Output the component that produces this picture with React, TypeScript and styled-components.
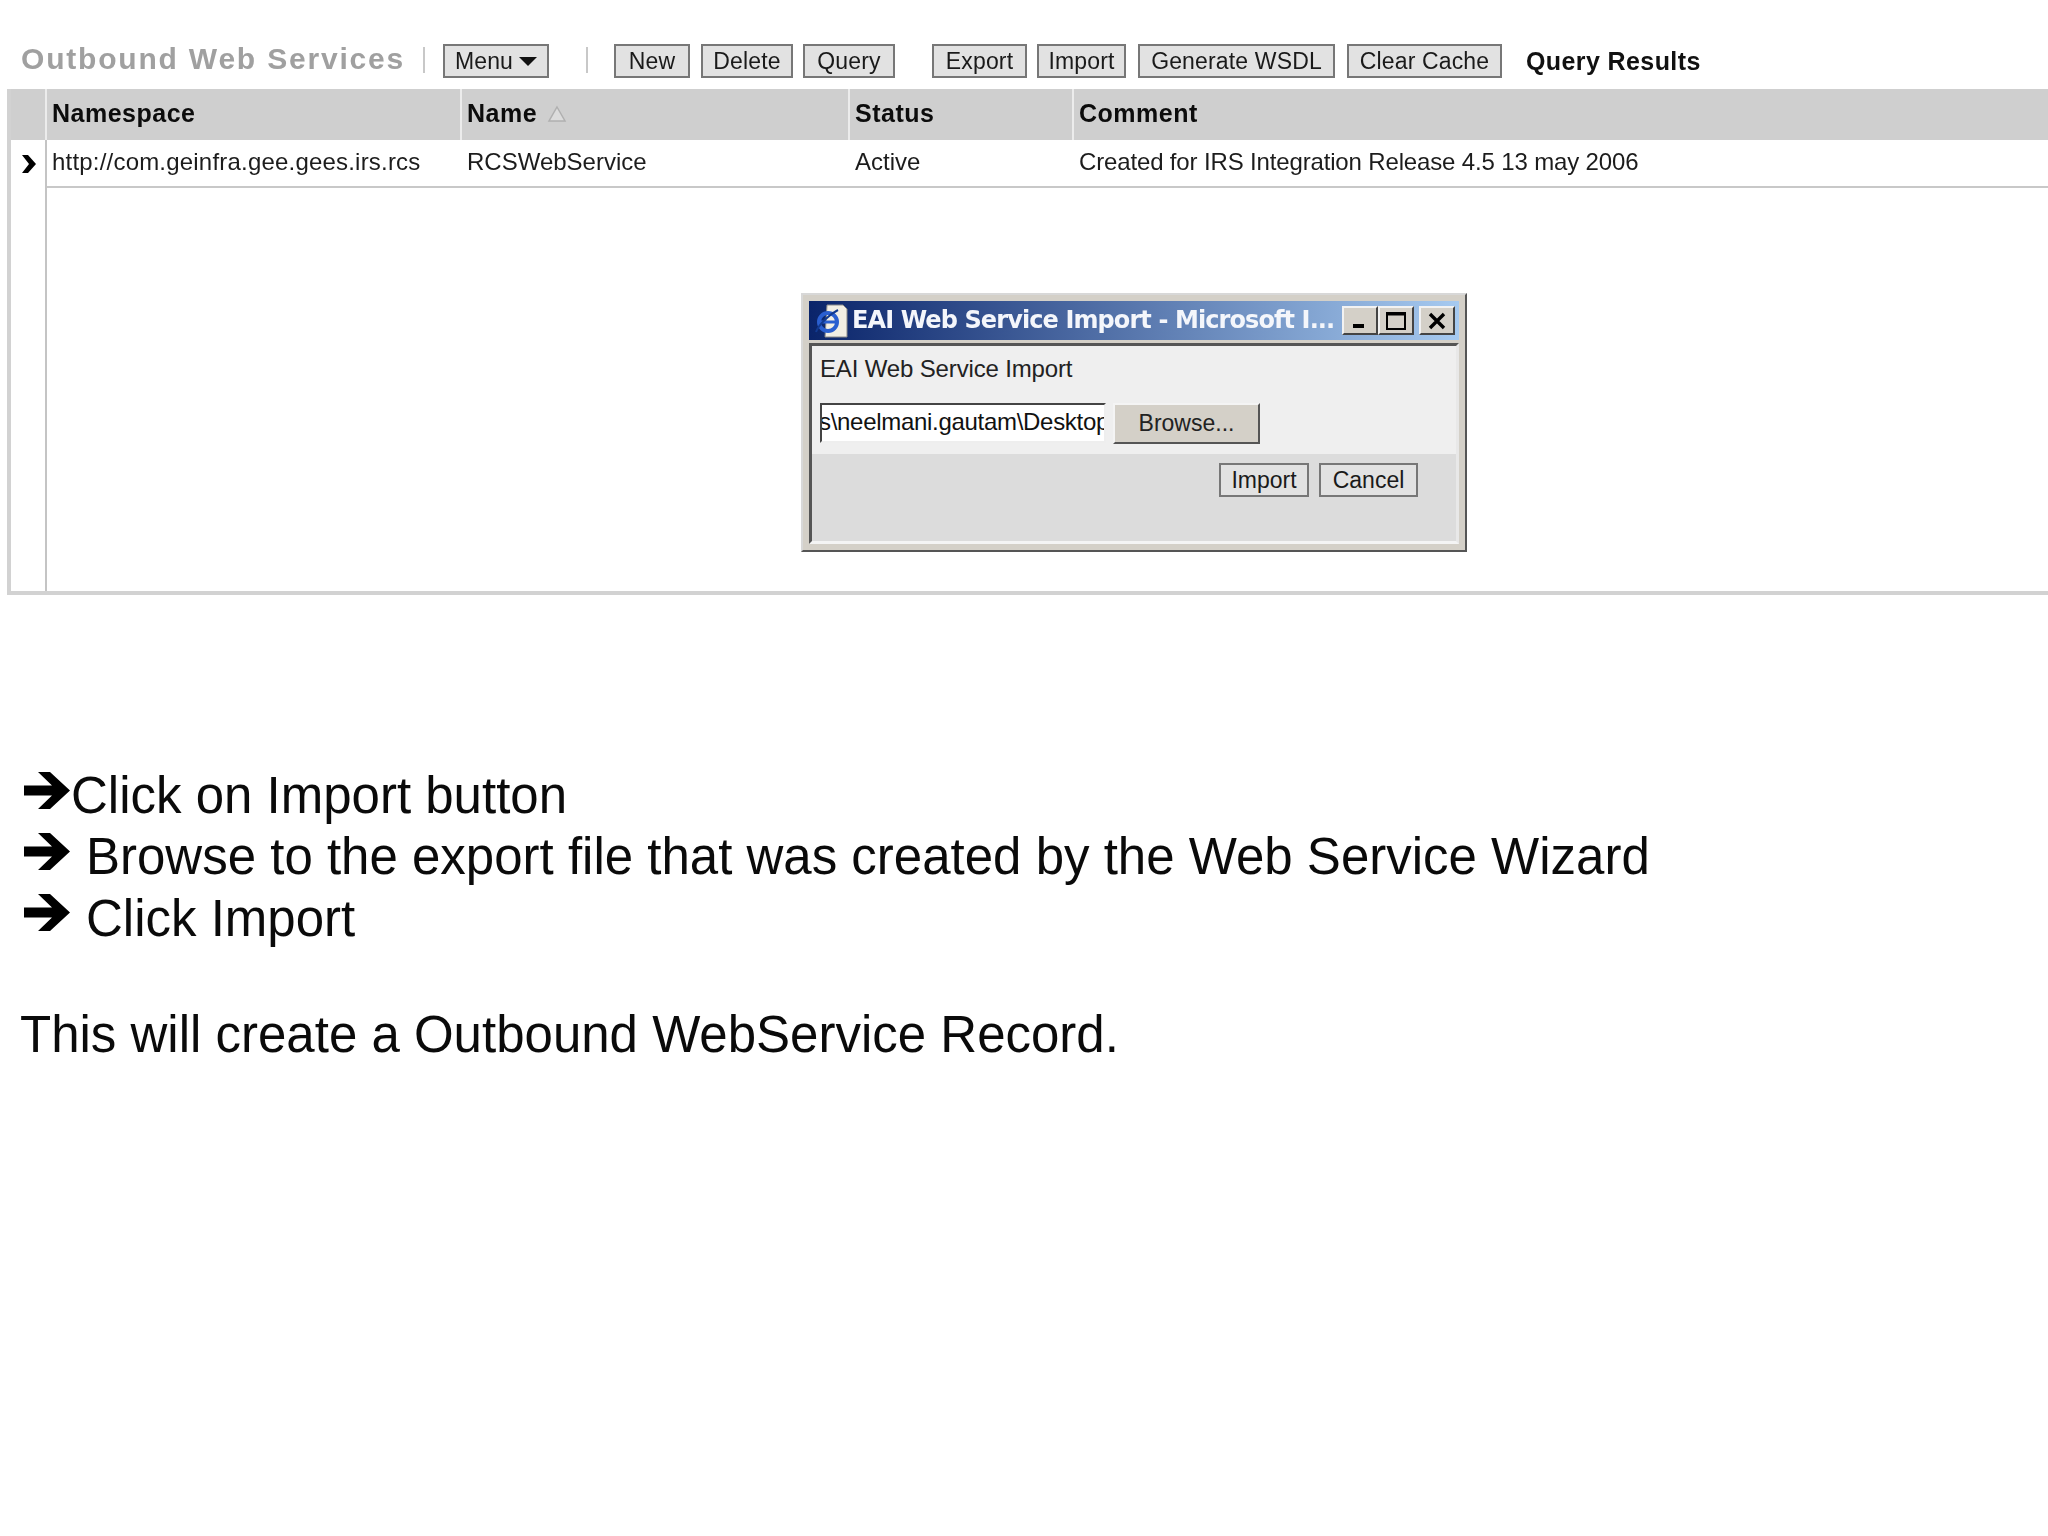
import React from "react";
import styled, { createGlobalStyle } from "styled-components";

const Global = createGlobalStyle`
  html, body { margin: 0; padding: 0; background: #fff; }
  body { font-family: "Liberation Sans", Arial, sans-serif; color: #000; }
`;

const Page = styled.div`
  position: relative;
  width: 2048px;
  height: 1536px;
  overflow: hidden;
  background: #fff;
  display: flex;
  flex-direction: column;
`;

const Shot = styled.div`
  display: flex;
  flex-direction: column;
  font-family: "Liberation Sans", Arial, sans-serif;
  filter: blur(0.45px);
`;

const Toolbar = styled.div`
  display: flex;
  align-items: center;
  height: 34px;
  margin-top: 44px;
  padding-left: 21px;
`;

const Title = styled.div`
  width: 402px;
  font-size: 30px;
  font-weight: 700;
  letter-spacing: 1.8px;
  color: #a0a0a0;
  white-space: nowrap;
  margin-top: -4px;
`;

const Rule = styled.div<{ $after: number }>`
  width: 2px;
  height: 26px;
  background: #c8c8c8;
  margin-right: ${(p) => p.$after}px;
  margin-top: -3px;
`;

const ToolButton = styled.div<{ $w: number; $after: number }>`
  box-sizing: border-box;
  width: ${(p) => p.$w}px;
  height: 34px;
  margin-right: ${(p) => p.$after}px;
  display: flex;
  align-items: center;
  justify-content: center;
  gap: 6px;
  background: #e2e2e2;
  border: 2px solid #777;
  font-size: 23px;
  letter-spacing: 0.15px;
  color: #1a1a1a;
  white-space: nowrap;
`;

const Caret = styled.span`
  width: 0;
  height: 0;
  border-left: 9px solid transparent;
  border-right: 9px solid transparent;
  border-top: 9px solid #111;
`;

const ResultsLabel = styled.div`
  font-size: 25px;
  font-weight: 700;
  letter-spacing: 0.4px;
  color: #111;
  white-space: nowrap;
`;

const Table = styled.div`
  box-sizing: border-box;
  margin: 11px 0 0 7px;
  height: 506px;
  border-left: 4px solid #d2d2d2;
  border-bottom: 4px solid #d2d2d2;
  display: flex;
  flex-direction: column;
`;

const columns = "34px 415px 388px 224px 1fr";

const HeaderRow = styled.div`
  display: grid;
  grid-template-columns: ${columns};
  height: 51px;
  flex: none;
  background: #cfcfcf;
`;

const HeaderCell = styled.div`
  display: flex;
  align-items: center;
  gap: 10px;
  padding: 0 0 2px 5px;
  border-left: 2px solid #ececec;
  font-size: 25px;
  font-weight: 700;
  letter-spacing: 0.5px;
  color: #0c0c0c;
  &:first-child { border-left: 0; }
`;

const Body = styled.div`
  flex: 1;
  display: grid;
  grid-template-columns: 34px 1fr;
`;

const Gutter = styled.div`
  display: flex;
  justify-content: center;
  padding-top: 14px;
  box-sizing: border-box;
`;

const Rows = styled.div`
  border-left: 2px solid #c4c4c4;
`;

const DataRow = styled.div`
  display: grid;
  grid-template-columns: 413px 388px 224px 1fr;
  height: 48px;
  box-sizing: border-box;
  border-bottom: 2px solid #c8c8c8;
`;

const DataCell = styled.div<{ $track?: number }>`
  display: flex;
  align-items: center;
  padding: 0 0 2px 5px;
  margin-left: 2px;
  font-size: 24px;
  letter-spacing: ${(p) => p.$track ?? 0}px;
  color: #1c1c1c;
  white-space: nowrap;
  &:first-child { margin-left: 0; }
`;

const Dialog = styled.div`
  position: absolute;
  left: 801px;
  top: 293px;
  width: 666px;
  height: 259px;
  box-sizing: border-box;
  padding: 6px;
  background: #d4d0c8;
  border: 2px solid;
  border-color: #d8d8d8 #555 #555 #d8d8d8;
  display: flex;
  flex-direction: column;
`;

const TitleBar = styled.div`
  height: 39px;
  flex: none;
  display: flex;
  align-items: center;
  padding: 0 4px 0 4px;
  background: linear-gradient(90deg, #0a246a 0%, #a6caf0 100%);
`;

const TitleText = styled.div`
  flex: 1;
  margin: -2px 0 0 3px;
  font-family: "DejaVu Sans", sans-serif;
  font-size: 24px;
  font-weight: 700;
  letter-spacing: -0.9px;
  color: #f4f6fb;
  white-space: nowrap;
  overflow: hidden;
`;

const WinButton = styled.div<{ $gap?: number }>`
  box-sizing: border-box;
  width: 36px;
  height: 29px;
  margin-left: ${(p) => p.$gap ?? 0}px;
  background: #d4d0c8;
  border: 2px solid;
  border-color: #f2f2f2 #444 #444 #f2f2f2;
  display: flex;
  align-items: center;
  justify-content: center;
`;

const DialogBody = styled.div`
  flex: 1;
  margin-top: 3px;
  display: flex;
  flex-direction: column;
  border: 3px solid;
  border-color: #555 #e8e8e8 #f4f4f4 #555;
  background: #dcdcdc;
`;

const DialogTop = styled.div`
  height: 108px;
  flex: none;
  box-sizing: border-box;
  padding: 7px 0 0 8px;
  background: #efefef;
`;

const DialogLabel = styled.div`
  font-size: 24px;
  line-height: 32px;
  letter-spacing: -0.15px;
  color: #222;
`;

const FileRow = styled.div`
  display: flex;
  margin-top: 18px;
`;

const FileInput = styled.div`
  box-sizing: border-box;
  width: 286px;
  height: 40px;
  line-height: 34px;
  background: #fff;
  border: 2px solid;
  border-color: #444 #eee #eee #444;
  overflow: hidden;
  text-indent: -3px;
  font-size: 24px;
  letter-spacing: -0.3px;
  color: #111;
  white-space: nowrap;
`;

const BrowseButton = styled.div`
  box-sizing: border-box;
  width: 147px;
  height: 41px;
  margin-left: 7px;
  background: #d4d0c8;
  border: 2px solid;
  border-color: #f4f4f4 #555 #555 #f4f4f4;
  display: flex;
  align-items: center;
  justify-content: center;
  font-size: 23px;
  color: #222;
`;

const DialogActions = styled.div`
  display: flex;
  justify-content: flex-end;
  gap: 10px;
  padding: 9px 38px 0 0;
`;

const ActionButton = styled.div<{ $w: number }>`
  box-sizing: border-box;
  width: ${(p) => p.$w}px;
  height: 34px;
  display: flex;
  align-items: center;
  justify-content: center;
  background: #e2e2e2;
  border: 2px solid #777;
  font-size: 23px;
  color: #1a1a1a;
`;

const Steps = styled.div`
  margin-top: 170px;
  padding-left: 20px;
  font-size: 51px;
  line-height: 61.3px;
  color: #0a0a0a;
`;

const Step = styled.div`
  display: flex;
  align-items: center;
  white-space: nowrap;
`;

const ArrowBox = styled.svg`
  width: 46px;
  height: 37px;
  flex: none;
  margin: -11px 0 0 4px;
`;

const StepText = styled.span<{ $lead: number }>`
  margin-left: ${(p) => p.$lead}px;
`;

const Summary = styled.div`
  margin-top: 55px;
`;

const Arrow = () => (
  <ArrowBox viewBox="0 0 46 37">
    <path d="M14 0h12l20 18.5L26 37H14l14-13.5H0v-10h28z" fill="#000" />
  </ArrowBox>
);

const tools: { label: string; w: number; after: number }[] = [
  { label: "New", w: 76, after: 11 },
  { label: "Delete", w: 92, after: 10 },
  { label: "Query", w: 92, after: 37 },
  { label: "Export", w: 95, after: 10 },
  { label: "Import", w: 89, after: 12 },
  { label: "Generate WSDL", w: 197, after: 12 },
  { label: "Clear Cache", w: 155, after: 24 },
];

export default function App() {
  return (
    <>
      <Global />
      <Page>
        <Shot>
          <Toolbar>
            <Title>Outbound Web Services</Title>
            <Rule $after={18} />
            <ToolButton $w={106} $after={37}>
              Menu <Caret />
            </ToolButton>
            <Rule $after={26} />
            {tools.map((t) => (
              <ToolButton key={t.label} $w={t.w} $after={t.after}>
                {t.label}
              </ToolButton>
            ))}
            <ResultsLabel>Query Results</ResultsLabel>
          </Toolbar>
          <Table>
            <HeaderRow>
              <HeaderCell />
              <HeaderCell>Namespace</HeaderCell>
              <HeaderCell>
                Name
                <svg width="20" height="18" viewBox="0 0 20 18">
                  <path d="M10 2 18 16H2z" fill="#dcdcdc" stroke="#b0b0b0" strokeWidth="1.5" />
                </svg>
              </HeaderCell>
              <HeaderCell>Status</HeaderCell>
              <HeaderCell>Comment</HeaderCell>
            </HeaderRow>
            <Body>
              <Gutter>
                <svg width="18" height="20" viewBox="0 0 18 20">
                  <path d="M3 1h6l8 9-8 9H3l7-9z" fill="#000" />
                </svg>
              </Gutter>
              <Rows>
                <DataRow>
                  <DataCell $track={0.2}>http://com.geinfra.gee.gees.irs.rcs</DataCell>
                  <DataCell>RCSWebService</DataCell>
                  <DataCell>Active</DataCell>
                  <DataCell $track={-0.15}>Created for IRS Integration Release 4.5 13 may 2006</DataCell>
                </DataRow>
              </Rows>
            </Body>
          </Table>
          <Dialog>
            <TitleBar>
              <svg width="36" height="34" viewBox="0 0 36 34">
                <path d="M14 1h16l4 4v28H12z" fill="#f1eee4" stroke="#8a8a8a" />
                <ellipse cx="15" cy="18" rx="9" ry="9" fill="none" stroke="#2a5fd0" strokeWidth="4" />
                <path d="M7 18h17" stroke="#2a5fd0" strokeWidth="3" />
                <path d="M3 28c3-8 14-18 22-22" stroke="#123a90" strokeWidth="2" fill="none" />
              </svg>
              <TitleText>EAI Web Service Import - Microsoft I...</TitleText>
              <WinButton>
                <svg width="18" height="16" viewBox="0 0 18 16">
                  <path d="M2 11h11v4H2z" fill="#000" />
                </svg>
              </WinButton>
              <WinButton>
                <svg width="24" height="20" viewBox="0 0 24 20">
                  <path d="M3 2h18v16H3z" fill="none" stroke="#000" strokeWidth="2" />
                  <path d="M3 3h18" stroke="#000" strokeWidth="3" />
                </svg>
              </WinButton>
              <WinButton $gap={5}>
                <svg width="20" height="18" viewBox="0 0 20 18">
                  <path d="M3 2l14 14M17 2 3 16" stroke="#000" strokeWidth="3.4" />
                </svg>
              </WinButton>
            </TitleBar>
            <DialogBody>
              <DialogTop>
                <DialogLabel>EAI Web Service Import</DialogLabel>
                <FileRow>
                  <FileInput>s\neelmani.gautam\Desktop</FileInput>
                  <BrowseButton>Browse...</BrowseButton>
                </FileRow>
              </DialogTop>
              <DialogActions>
                <ActionButton $w={90}>Import</ActionButton>
                <ActionButton $w={99}>Cancel</ActionButton>
              </DialogActions>
            </DialogBody>
          </Dialog>
        </Shot>
        <Steps>
          <Step>
            <Arrow />
            <StepText $lead={1}>Click on Import button</StepText>
          </Step>
          <Step>
            <Arrow />
            <StepText $lead={16}>Browse to the export file that was created by the Web Service Wizard</StepText>
          </Step>
          <Step>
            <Arrow />
            <StepText $lead={16}>Click Import</StepText>
          </Step>
          <Summary>This will create a Outbound WebService Record.</Summary>
        </Steps>
      </Page>
    </>
  );
}
